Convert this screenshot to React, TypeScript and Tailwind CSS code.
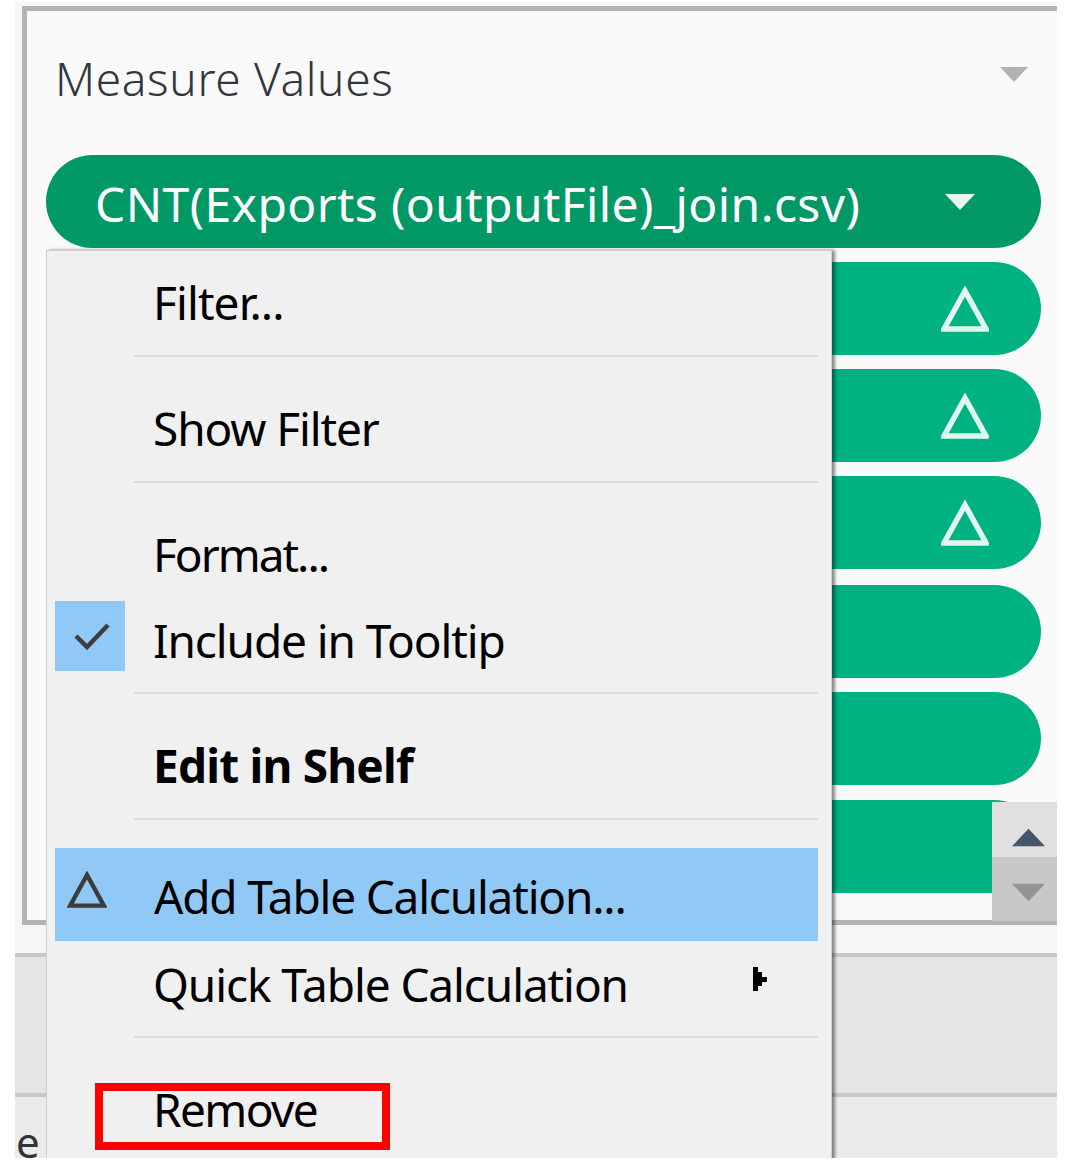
const pills = [
  { top: 'mt-[14px]', delta: true },
  { top: 'mt-[14px]', delta: true },
  { top: 'mt-[14px]', delta: true },
  { top: 'mt-[16px]', delta: false },
  { top: 'mt-[14px]', delta: false },
  { top: 'mt-[15px]', delta: false },
];

function Delta({ className, color }: { className: string; color: string }) {
  return (
    <svg className={className} viewBox="0 0 48 46" fill="none">
      <path d="M24 5 L3 43 H45 Z" stroke={color} strokeWidth="5.5" strokeLinejoin="miter" />
    </svg>
  );
}

function Caret({ className, color }: { className: string; color: string }) {
  return (
    <svg className={className} viewBox="0 0 30 16">
      <path d="M0 0 H30 L15 16 Z" fill={color} />
    </svg>
  );
}

function Sep() {
  return <div className="ml-[87px] mr-[13px] h-[2px] bg-[#dcdcdc]" />;
}

function MenuRow({ label, className }: { label: string; className: string }) {
  return <div className={`flex items-center pl-[106px] text-[46px] text-black ${className}`}>{label}</div>;
}

export default function App() {
  return (
    <div className="h-[1165px] w-[1092px] overflow-hidden bg-white font-['Noto_Sans',sans-serif]">
      <div className="relative ml-[15px] mt-[2px] inline-block h-[1156px] w-[1042px] overflow-hidden bg-[#f6f6f6] align-top">
        {/* measure values card */}
        <div className="ml-[7px] mt-[4px] h-[919px] overflow-hidden border-y-[5px] border-l-[5px] border-[#b4b4b4] bg-[#fafafa]">
          <div className="flex h-[144px] items-start justify-between">
            <span className="ml-[28px] mt-[37px] text-[46px] font-light leading-[60px] tracking-[0.65px] text-[#33373d]">Measure Values</span>
            <Caret className="mr-[28px] mt-[56px] h-[15px] w-[30px]" color="#b2b2b2" />
          </div>
          <div className="ml-[19px] mr-[16px] flex h-[93px] items-center justify-between rounded-full bg-[#009966] pl-[49px] pr-[66px] text-[48px] tracking-[0.4px] text-white">
            <span className="mt-[4px]">CNT(Exports (outputFile)_join.csv)</span>
            <Caret className="h-[16px] w-[30px]" color="#e6f5f1" />
          </div>
          {pills.map((pill, i) => (
            <div
              key={i}
              className={`ml-[19px] mr-[16px] flex h-[93px] items-center justify-end rounded-full bg-[#00b181] pr-[52px] ${pill.top}`}
            >
              {pill.delta && <Delta className="h-[46px] w-[48px]" color="#e2f6f0" />}
            </div>
          ))}
        </div>

        <div className="h-[28px] bg-[#f6f6f6]" />
        <div className="h-[144px] border-y-[4px] border-[#c8c8c8] bg-[#e5e5e5]" />
        <div className="h-[61px] overflow-hidden bg-[#ebebeb] pl-[1px] text-[42px] leading-[90px] text-[#333]">e</div>

        {/* scroll buttons */}
        <div className="absolute left-[977px] top-[800px] flex w-[65px] flex-col">
          <div className="flex h-[55px] items-start justify-center bg-[#e0e0e0] pl-[7px] pt-[26px]">
            <Caret className="h-[19px] w-[33px] rotate-180" color="#44546a" />
          </div>
          <div className="flex h-[64px] items-start justify-center bg-[#c8c8c8] pl-[7px] pt-[26px]">
            <Caret className="h-[19px] w-[33px]" color="#949494" />
          </div>
        </div>

        {/* context menu */}
        <div className="absolute left-[31px] top-[248px] h-[920px] w-[786px] border border-[#d0d0d0] bg-[#f0f0f0] shadow-[3px_0_3px_rgba(0,0,0,0.45)]">
          <MenuRow label="Filter..." className="h-[104px] pb-[2px] tracking-[-0.9px]" />
          <Sep />
          <MenuRow label="Show Filter" className="h-[124px] pt-[18px] tracking-[-1.1px]" />
          <Sep />
          <MenuRow label="Format..." className="h-[118px] pt-[24px] tracking-[-2px]" />
          <div className="relative">
            <MenuRow label="Include in Tooltip" className="h-[91px] pb-[12px] tracking-[-1.1px]" />
            <div className="absolute left-[8px] top-0 flex h-[70px] w-[70px] items-center justify-center bg-[#90c8f6]">
              <svg className="ml-[3px] h-[28px] w-[36px]" viewBox="0 0 36 28" fill="none">
                <path d="M2 14 L13 25 L34 3" stroke="#3c3c3c" strokeWidth="4.5" />
              </svg>
            </div>
          </div>
          <Sep />
          <MenuRow label="Edit in Shelf" className="h-[124px] pt-[18px] font-bold tracking-[-0.8px]" />
          <Sep />
          <div className="relative ml-[8px] mr-[13px] mt-[28px] flex h-[93px] items-center bg-[#90c8f6] pl-[99px] pt-[3px] text-[46px] tracking-[-1.2px] text-black">
            <Delta className="absolute left-[12px] top-[23px] h-[37px] w-[40px]" color="#3c3c3c" />
            Add Table Calculation...
          </div>
          <div className="relative">
            <MenuRow label="Quick Table Calculation" className="h-[95px] pb-[9px] tracking-[-1.1px]" />
            <svg className="absolute left-[706px] top-[26px] h-[24px] w-[14px]" viewBox="0 0 14 24" shapeRendering="crispEdges">
              <path d="M0 0 H5 V5 H9 V10 H14 V15 H9 V19 H5 V24 H0 Z" fill="#000" />
            </svg>
          </div>
          <Sep />
          <MenuRow label="Remove" className="h-[142px] tracking-[-1.6px]" />
        </div>

        {/* red annotation box */}
        <div className="absolute left-[80px] top-[1081px] h-[67px] w-[295px] border-[8px] border-[#ff0000]" />
      </div>
    </div>
  );
}
